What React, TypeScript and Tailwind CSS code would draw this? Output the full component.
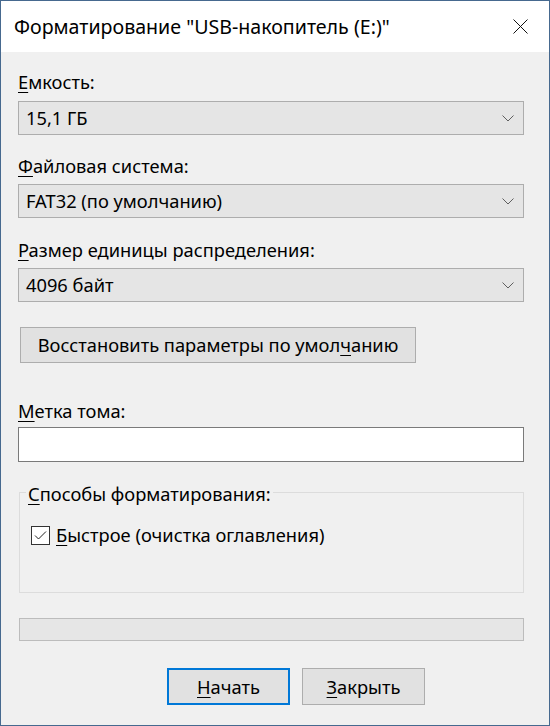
import React from "react";

const Chevron = () => (
  <svg width="12" height="7" viewBox="0 0 12 7" className="shrink-0">
    <polyline points="0.5,0.5 6,6 11.5,0.5" fill="none" stroke="#5f5f5f" strokeWidth="1" />
  </svg>
);

const U = ({ children }: { children: React.ReactNode }) => (
  <span className="underline decoration-1 underline-offset-[3px]">{children}</span>
);

const Combo = ({ children, mt }: { children: React.ReactNode; mt: string }) => (
  <div className={`${mt} h-[34px] border border-[#adadad] bg-[#e5e5e5] flex items-center justify-between pl-[7px] pr-[9px]`}>
    <span className="leading-[24px]">{children}</span>
    <Chevron />
  </div>
);

export default function App() {
  return (
    <div
      className="w-[550px] h-[726px] border border-[#46698f] bg-[#f0f0f0] flex flex-col text-black text-[18.3px]"
      style={{ fontFamily: '"Noto Sans", "Open Sans", sans-serif' }}
    >
      <div className="h-[51px] bg-white flex justify-between shrink-0">
        <div className="pl-[13px] pt-[14px] leading-[24px] text-[19.6px]">
          Форматирование "USB-накопитель (E:)"
        </div>
        <div className="pt-[18px] pr-[21px]">
          <svg width="15" height="15" viewBox="0 0 15 15">
            <path d="M0.5 0.5 L14.5 14.5 M14.5 0.5 L0.5 14.5" stroke="#111" strokeWidth="1" fill="none" />
          </svg>
        </div>
      </div>

      <div className="flex flex-col pl-[17px] pr-[25px]">
        <div className="mt-[18px] h-[24px] leading-[24px]">
          <U>Е</U>мкость:
        </div>
        <Combo mt="mt-[7px]">15,1 ГБ</Combo>

        <div className="mt-[19px] h-[24px] leading-[24px]">
          <U>Ф</U>айловая система:
        </div>
        <Combo mt="mt-[6px]">FAT32 (по умолчанию)</Combo>

        <div className="mt-[20px] h-[24px] leading-[24px]">
          <U>Р</U>азмер единицы распределения:
        </div>
        <Combo mt="mt-[6px]">4096 байт</Combo>

        <div className="mt-[25px] ml-[2px] w-[396px] h-[36px] border border-[#adadad] bg-[#e1e1e1] flex items-center justify-center leading-[24px]">
          Восстановить параметры по умол<U>ч</U>анию
        </div>

        <div className="mt-[36px] h-[24px] leading-[24px]">
          <U>М</U>етка тома:
        </div>
        <div className="mt-[4px] h-[35px] border border-[#7a7a7a] bg-white" />

        <div className="relative mt-[30px] ml-[1px] h-[101px] border border-[#dcdcdc]">
          <div className="absolute left-[6px] top-[-11px] px-[2px] bg-[#f0f0f0] leading-[24px]">
            <U>С</U>пособы форматирования:
          </div>
          <div className="flex items-center mt-[30px] ml-[11px]">
            <div className="w-[19px] h-[19px] border border-[#333333] bg-white flex items-center justify-center shrink-0">
              <svg width="13" height="11" viewBox="0 0 13 11">
                <polyline points="1,5.5 4.5,9 12,1.5" fill="none" stroke="#222" strokeWidth="1" />
              </svg>
            </div>
            <span className="ml-[6px] leading-[24px]">
              <U>Б</U>ыстрое (очистка оглавления)
            </span>
          </div>
        </div>

        <div className="mt-[25px] ml-[1px] h-[23px] border border-[#bcbcbc] bg-[#e6e6e6]" />

        <div className="mt-[27px] flex gap-[12px] pl-[149px]">
          <div className="w-[123px] h-[37px] border-2 border-[#0078d7] bg-[#e1e1e1] flex items-center justify-center leading-[24px]">
            <U>Н</U>ачать
          </div>
          <div className="w-[123px] h-[37px] border border-[#adadad] bg-[#e1e1e1] flex items-center justify-center leading-[24px]">
            <U>З</U>акрыть
          </div>
        </div>
      </div>
    </div>
  );
}
